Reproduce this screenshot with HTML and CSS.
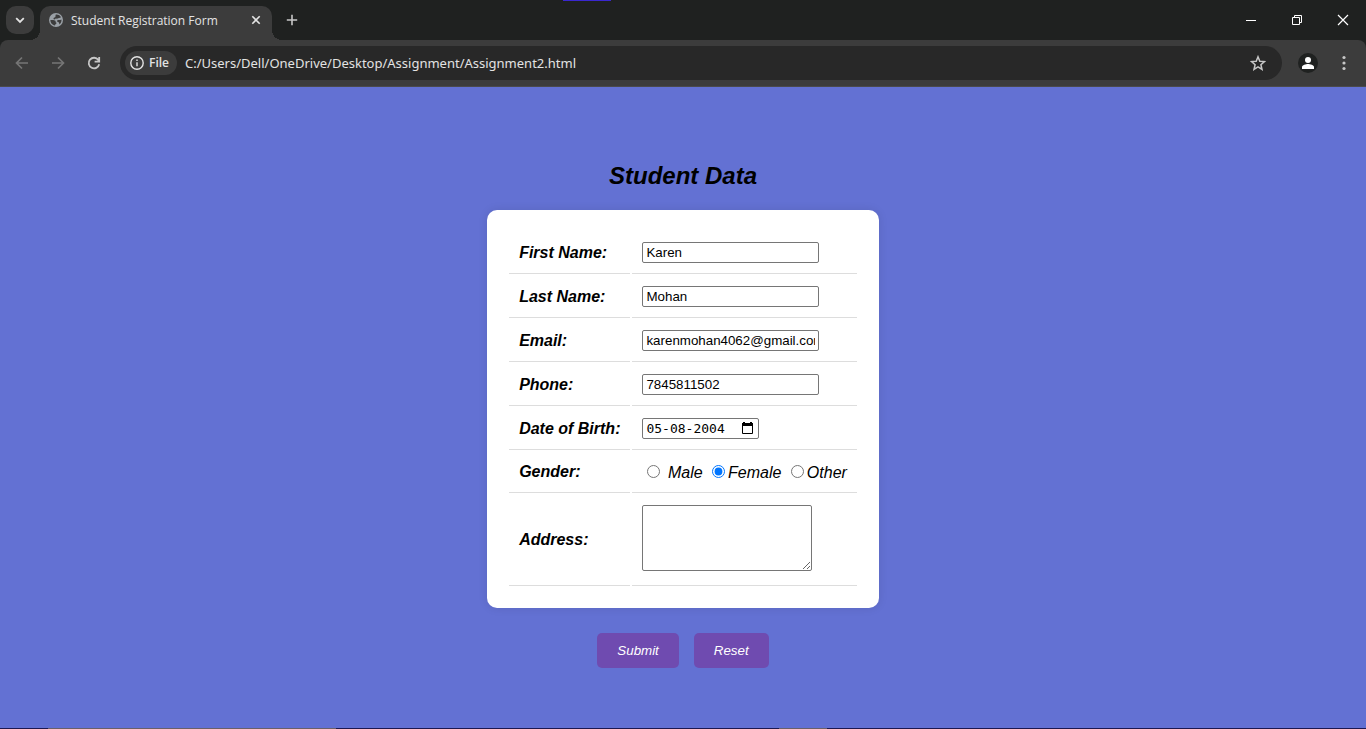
FILE: index.html
```
<!DOCTYPE html>
<html lang="en">
<head>
<meta charset="utf-8">
<meta name="viewport" content="width=device-width, initial-scale=1">
<title>Student Registration Form</title>
<link rel="stylesheet" href="styles.css">
</head>
<body>
<header class="browser">
  <div class="marker"></div>
  <div class="tab-strip">
    <button class="tab-search" type="button" aria-label="Search tabs">
      <svg width="20" height="20" viewBox="0 0 20 20" fill="none" stroke="#e3e3e3" stroke-width="1.800"><path d="M6.200 8.200 10 12l3.800-3.800"/></svg>
    </button>
    <div class="tab">
      <svg class="favicon" width="14" height="14" viewBox="0 0 14 14"><circle cx="7" cy="7" r="7" fill="#9aa0a6"/><path d="M1.400 7c1.900-.2 4.100-.2 5 .8.600.7-.2 1.500.7 1.800.8.300.3 1.100-.3 1.500-.6.300-.5.900-.8 1.400C3.300 12.100 1.300 9.800 1.400 7ZM6.800 1.500c2.400-.3 4.400 1 5.300 3-.9-.2-1.400.5-2.300.6-.8.100-1.200.9-2 .6-.8-.300-1.500-.5-1.700.3-.2.700-1.500.6-1.600-.3 0-.8.800-1.200 1.500-1.400.8-.3.300-1.800.8-2.800ZM12.500 6.500c.2 2.200-.7 4.100-2.500 5.100.4-.9.4-1.700-.2-2.200-.8-.6-1.900-.3-1.800-1.300.1-.8.900-1 1.700-1 1.100 0 1.900 0 2.800-.6Z" fill="#3c3c3c"/></svg>
      <span class="tab-title">Student Registration Form</span>
      <button class="plain tab-close" type="button" aria-label="Close tab">
        <svg width="16" height="16" viewBox="0 0 16 16" stroke="#e3e3e3" stroke-width="1.600"><path d="m4.300 4.300 7.400 7.400m0-7.400-7.400 7.400"/></svg>
      </button>
    </div>
    <button class="plain new-tab" type="button" aria-label="New tab">
      <svg width="20" height="20" viewBox="0 0 20 20" stroke="#c7c7c7" stroke-width="1.600"><path d="M10 4.800v10.400M4.800 10h10.400"/></svg>
    </button>
    <div class="window-controls">
      <button class="plain" type="button" aria-label="Minimize"><svg width="12" height="12" viewBox="0 0 12 12" stroke="#fff"><path d="M1 6.500h10"/></svg></button>
      <button class="plain" type="button" aria-label="Restore"><svg width="12" height="12" viewBox="0 0 12 12" fill="none" stroke="#fff"><path d="M1.500 3.500h7v7h-7zM3.500 3.500v-2h7v7h-2"/></svg></button>
      <button class="plain" type="button" aria-label="Close"><svg width="12" height="12" viewBox="0 0 12 12" stroke="#fff" stroke-width="1.200"><path d="m1 1 10 10M11 1 1 11"/></svg></button>
    </div>
  </div>
  <div class="toolbar">
    <nav class="nav-buttons">
      <button class="plain" type="button" aria-label="Back"><svg width="16" height="16" viewBox="0 0 16 16" fill="none" stroke="#757575" stroke-width="1.700"><path d="M14 8H3M8 2.500 2.500 8 8 13.500"/></svg></button>
      <button class="plain" type="button" aria-label="Forward"><svg width="16" height="16" viewBox="0 0 16 16" fill="none" stroke="#757575" stroke-width="1.700"><path d="M2 8h11M8 2.500 13.500 8 8 13.500"/></svg></button>
      <button class="plain" type="button" aria-label="Reload"><svg width="16" height="16" viewBox="0 0 16 16" fill="none" stroke="#c7c7c7" stroke-width="1.800"><path d="M13.200 9.200A5.300 5.300 0 1 1 12.300 4.900L13 5.800M13.200 2v4.600H8.600"/></svg></button>
    </nav>
    <div class="address-bar">
      <button class="file-chip" type="button">
        <svg width="14" height="14" viewBox="0 0 14 14" fill="none" stroke="#e3e3e3" stroke-width="1.400"><circle cx="7" cy="7" r="6.200"/><path d="M7 6.200v4M7 3.500v1.500"/></svg>
        <span>File</span>
      </button>
      <input class="address" type="text" aria-label="Address" value="C:/Users/Dell/OneDrive/Desktop/Assignment/Assignment2.html">
      <button class="plain" type="button" aria-label="Bookmark"><svg width="16" height="16" viewBox="0 0 16 16" fill="none" stroke="#c7c7c7" stroke-width="1.500"><path d="m8 1.800 1.800 4.400 4.700.4-3.600 3.100 1.100 4.600L8 11.800l-4 2.500 1.100-4.600-3.600-3.100 4.700-.4Z"/></svg></button>
    </div>
    <button class="plain profile" type="button" aria-label="Profile"><svg width="20" height="20" viewBox="0 0 20 20"><circle cx="10" cy="10" r="10" fill="#1f2120"/><circle cx="10" cy="7" r="3" fill="#fff"/><path d="M4 16v-2c0-2 4-3 6-3s6 1 6 3v2Z" fill="#fff"/></svg></button>
    <button class="plain menu" type="button" aria-label="Menu"><svg width="16" height="16" viewBox="0 0 16 16" fill="#c7c7c7"><circle cx="8" cy="2.500" r="1.600"/><circle cx="8" cy="8" r="1.600"/><circle cx="8" cy="13.500" r="1.600"/></svg></button>
  </div>
</header>
<main class="page">
  <h2 class="title">Student Data</h2>
  <form class="form">
    <div class="card">
      <table class="fields">
        <tr><th scope="row"><label for="first">First Name:</label></th><td><input class="field" id="first" type="text" value="Karen"></td></tr>
        <tr><th scope="row"><label for="last">Last Name:</label></th><td><input class="field" id="last" type="text" value="Mohan"></td></tr>
        <tr><th scope="row"><label for="email">Email:</label></th><td><input class="field" id="email" type="email" value="karenmohan4062@gmail.com"></td></tr>
        <tr><th scope="row"><label for="phone">Phone:</label></th><td><input class="field" id="phone" type="tel" value="7845811502"></td></tr>
        <tr><th scope="row"><label for="birth">Date of Birth:</label></th><td>
          <div class="date">
            <input class="date-text" id="birth" type="text" value="05-08-2004">
            <button class="plain" type="button" aria-label="Show calendar"><svg width="14" height="14" viewBox="0 0 14 14"><path d="M1.500 3.500h10v9h-10z" fill="none" stroke="#000"/><path d="M1 2h1V1h2v1h5V1h2v1h1v3H1z"/></svg></button>
          </div>
        </td></tr>
        <tr><th scope="row">Gender:</th><td class="genders"><input id="male" type="radio" name="gender"> <label for="male">Male</label> <input id="female" type="radio" name="gender" checked><label for="female">Female</label> <input id="other" type="radio" name="gender"><label for="other">Other</label></td></tr>
        <tr><th scope="row"><label for="home">Address:</label></th><td><textarea class="home" id="home" rows="4"></textarea></td></tr>
      </table>
    </div>
    <div class="actions">
      <button class="action" type="submit">Submit</button>
      <button class="action" type="reset">Reset</button>
    </div>
  </form>
</main>
<footer class="taskbar"><span class="task"></span><span class="task small"></span></footer>
</body>
</html>
```
FILE: styles.css
```
* { box-sizing: border-box; }

body {
  margin: 0;
  min-height: 100vh;
  display: flex;
  flex-direction: column;
  background: #6371d3;
  color: #000;
  font-family: "Liberation Sans", Arial, sans-serif;
}

/* Browser frame */
.browser {
  position: relative;
  background: #1f2120;
  color: #e3e3e3;
  font-family: "Open Sans", "Noto Sans", sans-serif;
}

.marker {
  position: absolute;
  top: 0;
  left: 563px;
  width: 48px;
  height: 1px;
  background: #3a27cf;
}

.plain {
  display: flex;
  align-items: center;
  justify-content: center;
  padding: 0;
  border: 0;
  background: none;
}

.tab-strip {
  display: flex;
  align-items: center;
  height: 40px;
  padding-left: 6px;
}

.tab-search {
  display: flex;
  align-items: center;
  justify-content: center;
  width: 28px;
  height: 28px;
  padding: 0;
  border: 0;
  border-radius: 10px;
  background: #3c3c3c;
}

.tab {
  position: relative;
  align-self: flex-end;
  display: flex;
  align-items: center;
  width: 232px;
  height: 34px;
  margin-left: 6px;
  padding: 0 8px 6px 9px;
  border-radius: 10px 10px 0 0;
  background: #3c3c3c;
}

.tab::before,
.tab::after {
  content: "";
  position: absolute;
  bottom: 0;
  width: 10px;
  height: 10px;
}

.tab::before {
  right: 100%;
  background: radial-gradient(circle at 0 0, transparent 10px, #3c3c3c 10px);
}

.tab::after {
  left: 100%;
  background: radial-gradient(circle at 100% 0, transparent 10px, #3c3c3c 10px);
}

.tab-title {
  flex: 1;
  margin-left: 8px;
  padding-top: 1px;
  font-size: 12px;
  line-height: 16px;
  white-space: nowrap;
}

.new-tab {
  width: 28px;
  height: 28px;
  margin-left: 6px;
}

.window-controls {
  display: flex;
  margin-left: auto;
}

.window-controls .plain {
  width: 46px;
  height: 40px;
}

.toolbar {
  display: flex;
  align-items: center;
  height: 47px;
  padding: 0 8px;
  border-bottom: 1px solid #4a4a4c;
  border-radius: 8px 8px 0 0;
  background: #3c3c3c;
}

.nav-buttons {
  display: flex;
  gap: 8px;
  margin-right: 12px;
}

.nav-buttons .plain,
.profile,
.menu {
  width: 28px;
  height: 28px;
}

.address-bar {
  flex: 1;
  display: flex;
  align-items: center;
  height: 34px;
  padding: 0 16px 0 5px;
  border-radius: 17px;
  background: #282828;
}

.file-chip {
  display: flex;
  align-items: center;
  gap: 5px;
  height: 24px;
  padding: 0 8px 0 5px;
  border: 0;
  border-radius: 12px;
  background: #3c3c3c;
  color: #e3e3e3;
  font: 600 12px/16px "Open Sans", "Noto Sans", sans-serif;
}

.address {
  flex: 1;
  min-width: 0;
  margin-left: 8px;
  padding: 0;
  border: 0;
  outline: 0;
  background: none;
  color: #e3e3e3;
  font: 13px/20px "Noto Sans", "Open Sans", sans-serif;
}

.profile { margin-left: 12px; }
.menu { margin-left: 8px; }

/* Registration page */
.page {
  flex: 1;
  display: flex;
  flex-direction: column;
  align-items: center;
  justify-content: center;
  padding: 20px 0 6px;
  font-style: italic;
}

.title {
  margin: 0 0 20px;
  font-size: 24px;
  line-height: 28px;
}

.form {
  display: flex;
  flex-direction: column;
  align-items: center;
  gap: 25px;
}

.card {
  padding: 20px;
  border-radius: 10px;
  background: #fff;
  box-shadow: 0 0 10px rgba(0, 0, 0, 0.1);
}

.fields { border-spacing: 2px; }

.fields th,
.fields td {
  padding: 10px;
  border-bottom: 1px solid #ddd;
  text-align: left;
  line-height: 19px;
}

.fields th { white-space: nowrap; }

.field {
  display: block;
  width: 177px;
  height: 21px;
  padding: 1px 3px;
  border: 1px solid #767676;
  border-radius: 2px;
  font-family: inherit;
}

.date {
  display: flex;
  align-items: center;
  width: 117px;
  height: 21px;
  padding: 0 3px;
  border: 1px solid #767676;
  border-radius: 2px;
}

.date-text {
  flex: 1;
  min-width: 0;
  padding: 2px 0 0;
  border: 0;
  outline: 0;
  font: 13px/16px "DejaVu Sans Mono", monospace;
}

.genders { white-space: nowrap; }

.home {
  display: block;
  width: 170px;
  height: 66px;
  margin-bottom: 4px;
  padding: 2px;
  border: 1px solid #767676;
  border-radius: 2px;
}

.actions {
  display: flex;
  gap: 15px;
}

.action {
  padding: 10px 20px;
  border: 0;
  border-radius: 5px;
  background: #6f4bb0;
  color: #fff;
  font-family: inherit;
  font-style: italic;
}

/* Sliver of the desktop taskbar */
.taskbar {
  display: flex;
  gap: 443px;
  height: 1px;
  padding-left: 48px;
  background: #1c1850;
}

.task {
  width: 288px;
  background: #6a6068;
}

.task.small { width: 48px; }
```
